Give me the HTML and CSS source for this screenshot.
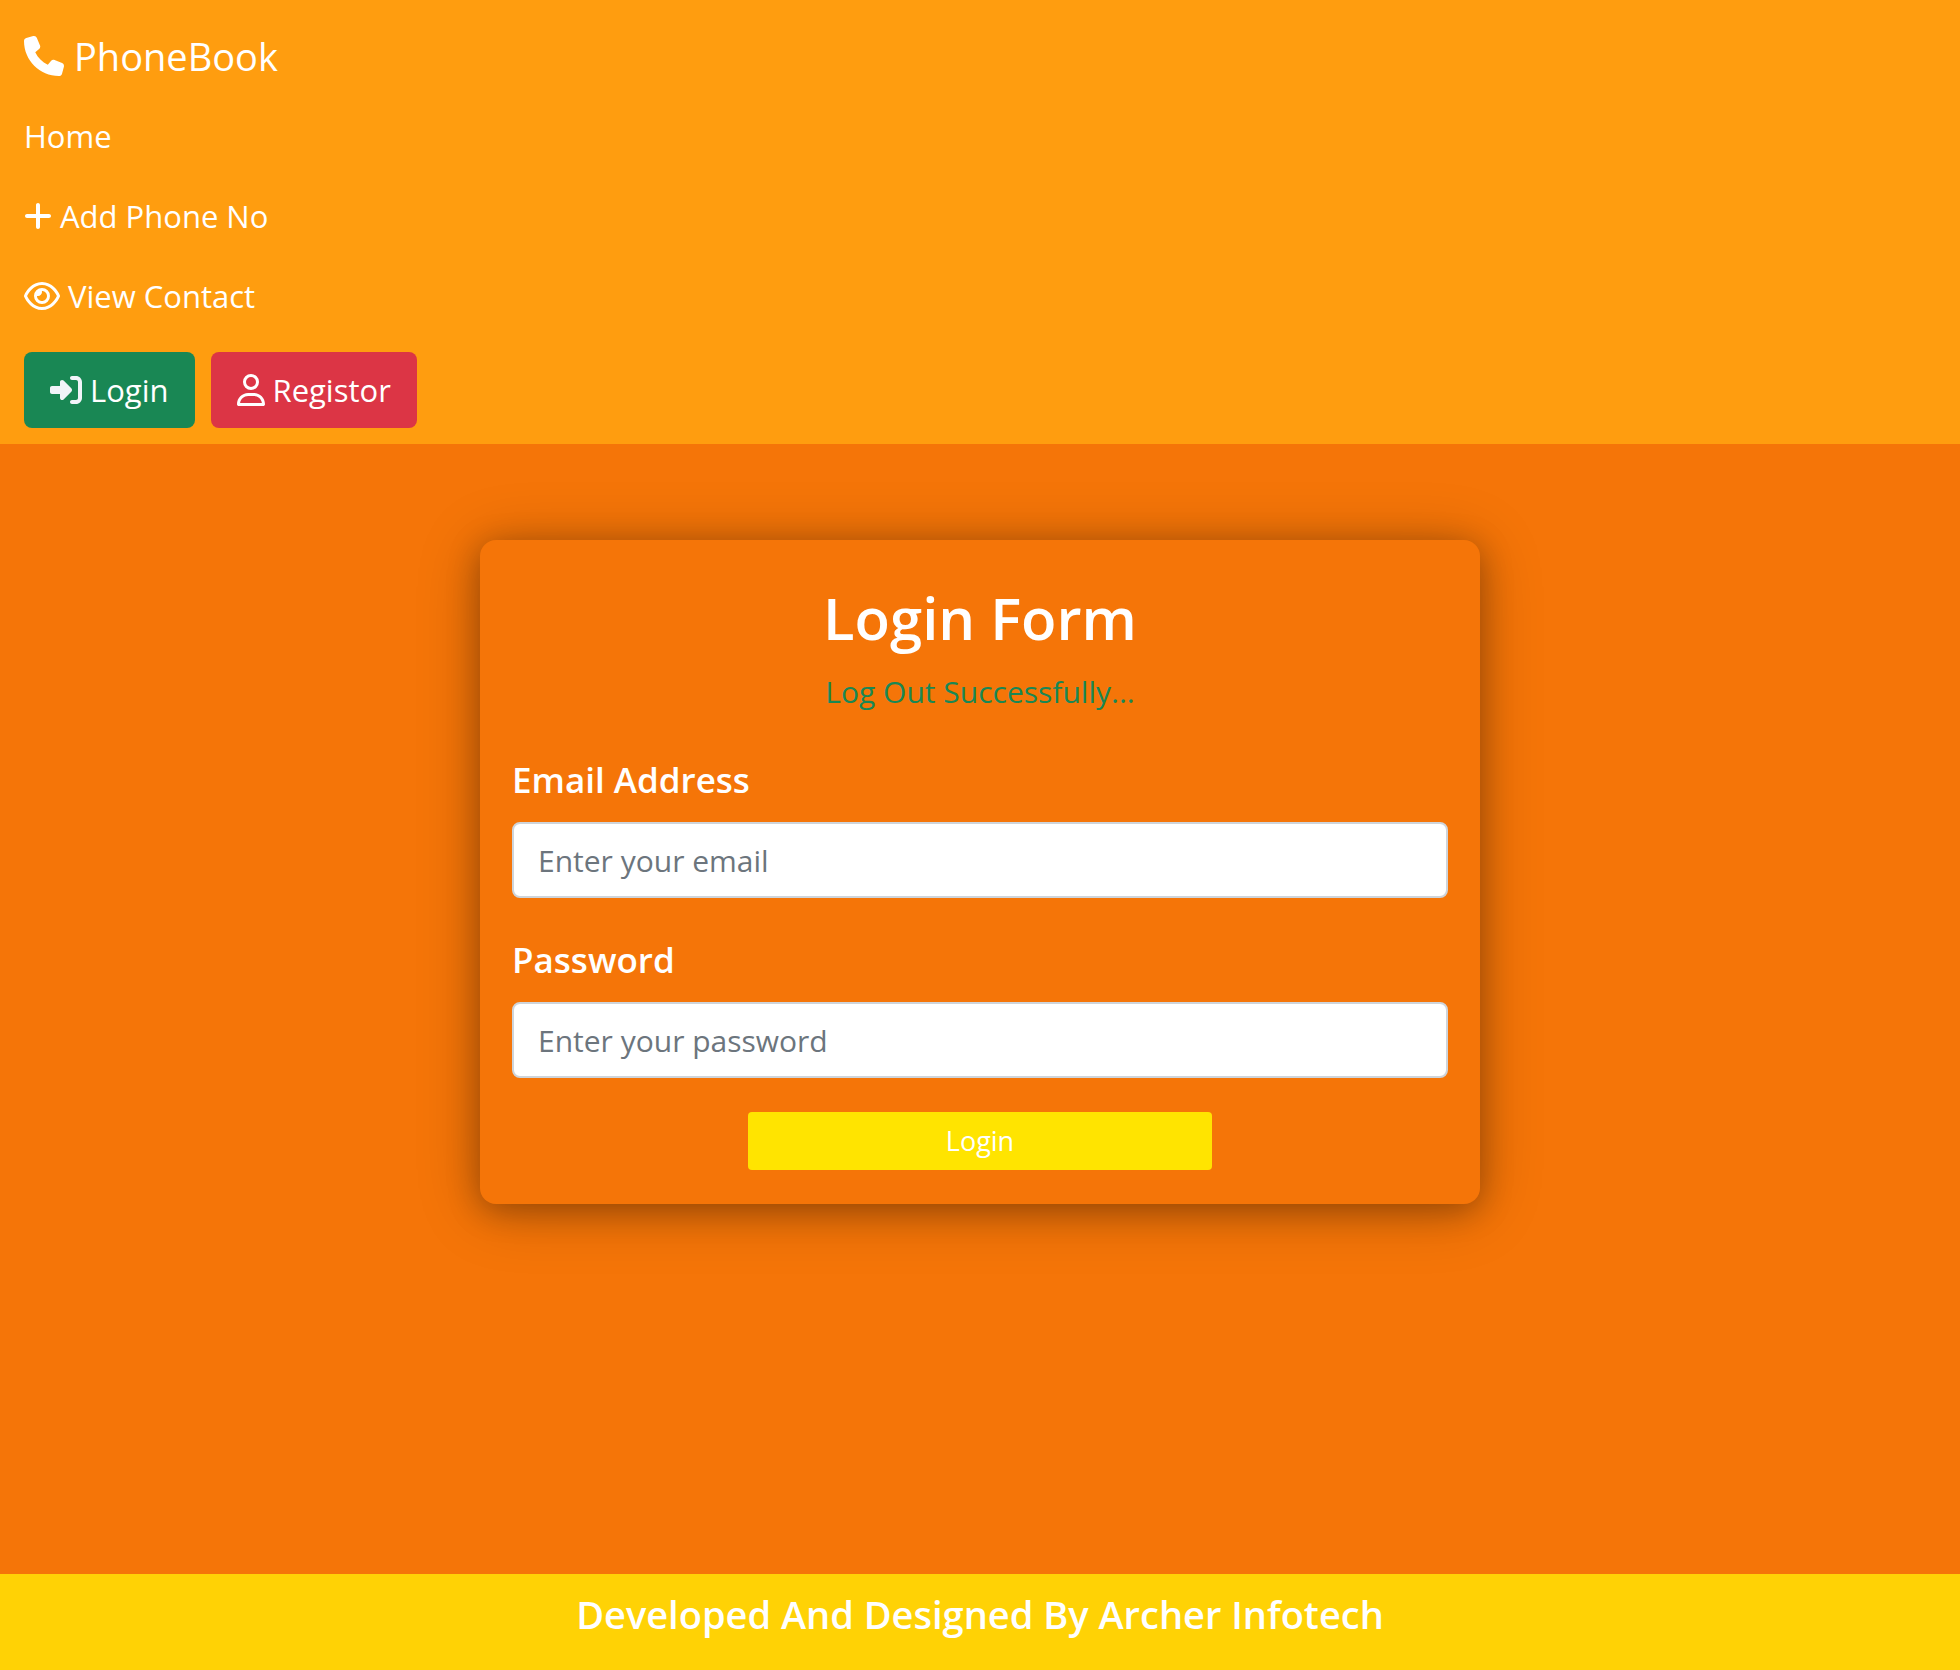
FILE: index.html
```html
<!DOCTYPE html>
<html lang="en">
<head>
  <meta charset="utf-8">
  <meta name="viewport" content="width=device-width, initial-scale=1">
  <title>PhoneBook - Login</title>
  <link rel="stylesheet" href="styles.css">
</head>
<body>
  <header class="navbar">
    <a class="brand" href="#">
      <svg class="icon" width="40" height="40" viewBox="0 0 512 512" aria-hidden="true"><path d="M164.9 24.6c-7.7-18.6-28-28.5-47.4-23.2l-88 24C12.1 30.2 0 46 0 64C0 311.4 200.6 512 448 512c18 0 33.8-12.1 38.6-29.5l24-88c5.3-19.4-4.6-39.7-23.2-47.4l-96-40c-16.3-6.8-35.2-2.1-46.3 11.6L304.7 368C234.3 334.7 177.3 277.7 144 207.3L193.3 167c13.7-11.2 18.4-30 11.6-46.3l-40-96z"/></svg>
      <span>PhoneBook</span>
    </a>
    <nav class="nav-links">
      <a class="nav-link" href="#">Home</a>
      <a class="nav-link" href="#">
        <svg class="icon" width="28" height="32" viewBox="0 0 448 512" aria-hidden="true"><path d="M256 80c0-17.7-14.3-32-32-32s-32 14.3-32 32V224H48c-17.7 0-32 14.3-32 32s14.3 32 32 32H192V432c0 17.7 14.3 32 32 32s32-14.3 32-32V288H400c17.7 0 32-14.3 32-32s-14.3-32-32-32H256V80z"/></svg>
        <span>Add Phone No</span>
      </a>
      <a class="nav-link" href="#">
        <svg class="icon" width="36" height="32" viewBox="0 0 576 512" aria-hidden="true"><path d="M288 80c-65.2 0-118.8 29.6-159.9 67.7C89.6 183.5 63 226 49.4 256c13.6 30 40.2 72.5 78.6 108.3C169.2 402.4 222.8 432 288 432s118.8-29.6 159.9-67.7C486.4 328.5 513 286 526.6 256c-13.6-30-40.2-72.5-78.6-108.3C406.8 109.6 353.2 80 288 80zM95.4 112.6C142.5 68.8 207.2 32 288 32s145.5 36.8 192.6 80.6c46.8 43.5 78.1 95.4 93 131.1c3.3 7.9 3.3 16.7 0 24.6c-14.9 35.7-46.2 87.7-93 131.1C433.5 443.2 368.8 480 288 480s-145.5-36.8-192.6-80.6C48.6 356 17.3 304 2.5 268.3c-3.3-7.9-3.3-16.7 0-24.6C17.3 208 48.6 156 95.4 112.6zM288 336c44.2 0 80-35.8 80-80s-35.8-80-80-80c-.7 0-1.3 0-2 0c1.3 5.1 2 10.5 2 16c0 35.3-28.7 64-64 64c-5.5 0-10.9-.7-16-2c0 .7 0 1.3 0 2c0 44.2 35.8 80 80 80zm0-208a128 128 0 1 1 0 256 128 128 0 1 1 0-256z"/></svg>
        <span>View Contact</span>
      </a>
    </nav>
    <div class="actions">
      <a class="btn btn-login" href="#">
        <svg class="icon icon-light" width="32" height="32" viewBox="0 0 512 512" aria-hidden="true"><path d="M217.9 105.9L340.7 228.7c7.2 7.2 11.3 17.1 11.3 27.3s-4.1 20.1-11.3 27.3L217.9 406.1c-6.4 6.4-15 9.9-24 9.9c-18.7 0-33.9-15.2-33.9-33.9l0-62.1L32 320c-17.7 0-32-14.3-32-32l0-64c0-17.7 14.3-32 32-32l128 0 0-62.1c0-18.7 15.2-33.9 33.9-33.9c9 0 17.6 3.6 24 9.9zM352 416l64 0c17.7 0 32-14.3 32-32l0-256c0-17.7-14.3-32-32-32l-64 0c-17.7 0-32-14.3-32-32s14.3-32 32-32l64 0c53 0 96 43 96 96l0 256c0 53-43 96-96 96l-64 0c-17.7 0-32-14.3-32-32s14.3-32 32-32z"/></svg>
        <span>Login</span>
      </a>
      <a class="btn btn-register" href="#">
        <svg class="icon" width="28" height="32" viewBox="0 0 448 512" aria-hidden="true"><path d="M304 128a80 80 0 1 0 -160 0 80 80 0 1 0 160 0zM96 128a128 128 0 1 1 256 0A128 128 0 1 1 96 128zM49.3 464H398.7c-8.9-63.3-63.3-112-129-112H178.3c-65.7 0-120.1 48.7-129 112zM0 482.3C0 383.8 79.8 304 178.3 304h91.4C368.2 304 448 383.8 448 482.3c0 16.4-13.3 29.7-29.7 29.7H29.7C13.3 512 0 498.7 0 482.3z"/></svg>
        <span>Registor</span>
      </a>
    </div>
  </header>

  <main class="content">
    <form class="card">
      <h1 class="card-title">Login Form</h1>
      <p class="message">Log Out Successfully...</p>
      <div class="fields">
        <div class="field">
          <label class="label" for="email">Email Address</label>
          <input class="input" id="email" type="email" placeholder="Enter your email">
        </div>
        <div class="field">
          <label class="label" for="password">Password</label>
          <input class="input" id="password" type="password" placeholder="Enter your password">
        </div>
      </div>
      <button class="submit" type="submit">Login</button>
    </form>
  </main>

  <footer class="footer">
    <p class="footer-text">Developed And Designed By Archer Infotech</p>
  </footer>
</body>
</html>
```
FILE: styles.css
```css
* {
  box-sizing: border-box;
}

body {
  margin: 0;
  min-height: 100vh;
  display: flex;
  flex-direction: column;
  background: #f57508;
  color: #fff;
  font-family: "Open Sans", "Noto Sans", sans-serif;
  font-size: 30px;
  line-height: 48px;
}

a {
  color: inherit;
  text-decoration: none;
}

.icon {
  flex: none;
  fill: currentColor;
}

.icon-light {
  color: #f1f4f9;
}

.navbar {
  display: flex;
  flex-direction: column;
  align-items: flex-start;
  padding: 16px 24px;
  background: #ff9d0f;
  font-size: 31px;
}

.brand {
  display: flex;
  align-items: center;
  gap: 10px;
  padding: 10px 0;
  font-size: 38px;
  line-height: 60px;
}

.nav-links {
  display: flex;
  flex-direction: column;
  align-items: flex-start;
}

.nav-link {
  display: flex;
  align-items: center;
  gap: 8px;
  padding: 16px 0;
}

.actions {
  display: flex;
  gap: 16px;
  margin-top: 16px;
}

.btn {
  display: flex;
  align-items: center;
  gap: 8px;
  padding: 14px 26px;
  border-radius: 8px;
}

.btn-login {
  background: #198754;
}

.btn-register {
  background: #dc3545;
}

.content {
  flex: 1;
  padding: 96px 24px;
}

.card {
  display: flex;
  flex-direction: column;
  max-width: 1000px;
  margin: 0 auto;
  padding: 32px 32px 34px;
  border-radius: 16px;
  background: #f57508;
  box-shadow: 0 6px 32px rgba(0, 0, 0, 0.28), 0 6px 64px rgba(0, 0, 0, 0.24);
}

.card-title {
  margin: 12px 0 16px;
  font-size: 58px;
  font-weight: 600;
  line-height: 68px;
  text-align: center;
}

.message {
  margin: 0 0 38px;
  color: #198754;
  text-align: center;
}

.fields {
  display: flex;
  flex-direction: column;
  gap: 36px;
  margin-bottom: 34px;
}

.field {
  display: flex;
  flex-direction: column;
  gap: 16px;
}

.label {
  font-size: 35px;
  font-weight: 600;
  line-height: 52px;
}

.input {
  width: 100%;
  height: 76px;
  padding: 12px 24px;
  border: 2px solid #ced4da;
  border-radius: 8px;
  background: #fff;
  color: #212529;
  font: inherit;
}

.input::placeholder {
  color: #6c757d;
  opacity: 1;
}

.submit {
  align-self: center;
  width: 100%;
  max-width: 464px;
  height: 58px;
  padding: 0;
  border: 0;
  border-radius: 4px;
  background: #ffe400;
  color: #fff;
  font: inherit;
  font-size: 27px;
}

.footer {
  padding: 16px 24px 32px;
  background: #ffd205;
  text-align: center;
}

.footer-text {
  margin: 0;
  font-size: 38px;
  font-weight: 600;
}
```
